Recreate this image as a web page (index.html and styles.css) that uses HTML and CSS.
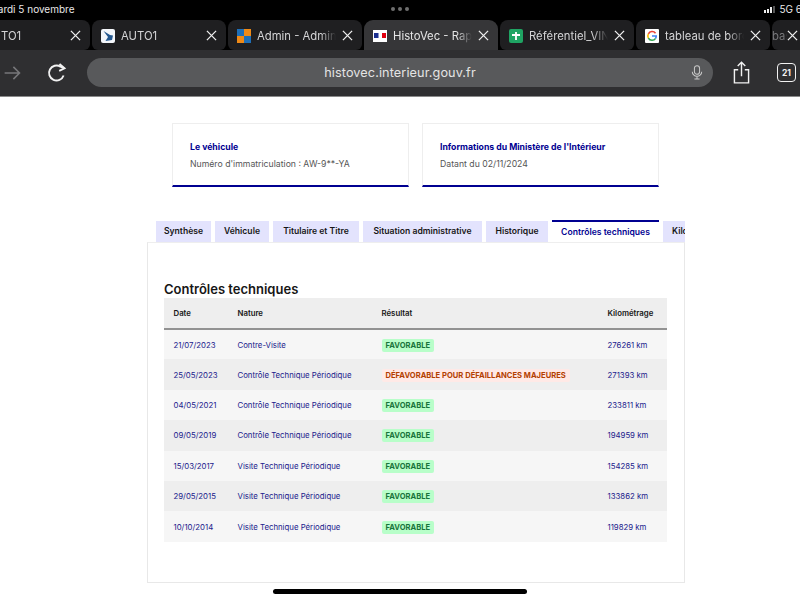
FILE: index.html
```html
<!DOCTYPE html>
<html lang="fr">
<head>
    <meta charset="UTF-8">
    <title>HistoVec - Rapport</title>
    <link rel="stylesheet" href="styles.css">
</head>
<body>
    <div class="status-bar">
        <span class="status-date">mardi 5 novembre</span>
        <span class="status-dots"><i></i><i></i><i></i></span>
        <span class="status-right">
            <span class="signal"><i></i><i></i><i></i><i></i></span>
            <span class="status-net">5G 61</span>
        </span>
    </div>

    <div class="tab-strip">
        <div class="tab">
            <span class="favicon"></span>
            <span class="tab-title">AUTO1</span>
            <svg class="tab-close" viewBox="0 0 12 12"><path d="M1 1L11 11M11 1L1 11"/></svg>
        </div>
        <div class="tab">
            <svg class="favicon" viewBox="0 0 14 14"><rect width="14" height="14" rx="2" fill="#f4f7fb"/><path d="M2.5 2L9 6L12 6.5L11 11L4.5 12L7 8Z" fill="#24588f"/></svg>
            <span class="tab-title">AUTO1</span>
            <svg class="tab-close" viewBox="0 0 12 12"><path d="M1 1L11 11M11 1L1 11"/></svg>
        </div>
        <div class="tab">
            <svg class="favicon" viewBox="0 0 14 14"><rect x="7" width="7" height="7" fill="#ef8a17"/><rect y="7" width="7" height="7" fill="#ef8a17"/><rect width="7" height="7" fill="#1e6fb8"/><rect x="7" y="7" width="7" height="7" fill="#1e6fb8"/></svg>
            <span class="tab-title">Admin - Admin</span>
            <svg class="tab-close" viewBox="0 0 12 12"><path d="M1 1L11 11M11 1L1 11"/></svg>
        </div>
        <div class="tab tab-active">
            <svg class="favicon" viewBox="0 0 14 14"><rect y="1" width="14" height="12" fill="#fff"/><rect x="1" y="4" width="4.5" height="5" fill="#1b2f8f"/><rect x="9" y="4" width="4" height="5" fill="#e1000f"/></svg>
            <span class="tab-title">HistoVec - Rapport</span>
            <svg class="tab-close" viewBox="0 0 12 12"><path d="M1 1L11 11M11 1L1 11"/></svg>
        </div>
        <div class="tab">
            <svg class="favicon" viewBox="0 0 14 14"><rect width="14" height="14" rx="2" fill="#1fa463"/><path d="M3 6H11M7 3V11" stroke="#fff" stroke-width="1.8" fill="none"/></svg>
            <span class="tab-title">Référentiel_VIN</span>
            <svg class="tab-close" viewBox="0 0 12 12"><path d="M1 1L11 11M11 1L1 11"/></svg>
        </div>
        <div class="tab">
            <svg class="favicon" viewBox="0 0 14 14"><rect width="14" height="14" rx="1" fill="#fff"/><path d="M10.5 4.2A4.2 4.2 0 0 0 3.4 4.9" stroke="#ea4335" stroke-width="1.6" fill="none"/><path d="M3.4 4.9A4.2 4.2 0 0 0 3.4 9.1" stroke="#fbbc05" stroke-width="1.6" fill="none"/><path d="M3.4 9.1A4.2 4.2 0 0 0 10.6 9.4" stroke="#34a853" stroke-width="1.6" fill="none"/><path d="M10.6 9.4C11 8.8 11.2 8 11.2 7H7" stroke="#4285f4" stroke-width="1.6" fill="none"/></svg>
            <span class="tab-title">tableau de bord</span>
            <svg class="tab-close" viewBox="0 0 12 12"><path d="M1 1L11 11M11 1L1 11"/></svg>
        </div>
        <div class="tab tab-last">
            <span class="tab-title">bas</span>
            <svg class="tab-close" viewBox="0 0 12 12"><path d="M1 1L11 11M11 1L1 11"/></svg>
        </div>
    </div>

    <div class="toolbar">
        <svg class="tool-forward" viewBox="0 0 20 16"><path d="M1 8H18M11 1L18 8L11 15"/></svg>
        <svg class="tool-reload" viewBox="0 0 20 20"><path d="M16.6 12.5A7.5 7.5 0 1 1 13.5 3.6L17 5.2"/><path d="M12.5 1L17.5 5.3L12.2 7.8"/></svg>
        <div class="url-pill">
            <span class="url-text">histovec.interieur.gouv.fr</span>
            <svg class="tool-mic" viewBox="0 0 14 18"><rect x="4" y="1" width="6" height="10" rx="3"/><path d="M1.5 8A5.5 5.5 0 0 0 12.5 8M7 13.5V16.5M4 16.5H10"/></svg>
        </div>
        <svg class="tool-share" viewBox="0 0 18 24"><path d="M5.5 9H1.5V23H16.5V9H12.5M9 16V1.5M5 5L9 1.2L13 5"/></svg>
        <span class="tab-count">21</span>
    </div>

    <main class="page">
        <section class="cards">
            <div class="card">
                <h3>Le véhicule</h3>
                <p>Numéro d'immatriculation : AW-9**-YA</p>
            </div>
            <div class="card">
                <h3>Informations du Ministère de l'Intérieur</h3>
                <p>Datant du 02/11/2024</p>
            </div>
        </section>

        <nav class="report-tabs">
            <span class="report-tab">Synthèse</span>
            <span class="report-tab">Véhicule</span>
            <span class="report-tab">Titulaire et Titre</span>
            <span class="report-tab">Situation administrative</span>
            <span class="report-tab">Historique</span>
            <span class="report-tab report-tab-on">Contrôles techniques</span>
            <span class="report-tab report-tab-cut">Kilométrage</span>
        </nav>

        <section class="panel">
            <h2>Contrôles techniques</h2>
            <table class="ct-table">
                <colgroup>
                    <col class="col-date"><col class="col-nature"><col class="col-result"><col class="col-km">
                </colgroup>
                <thead>
                    <tr><th>Date</th><th>Nature</th><th>Résultat</th><th>Kilométrage</th></tr>
                </thead>
                <tbody>
                    <tr><td>21/07/2023</td><td>Contre-Visite</td><td><span class="badge">FAVORABLE</span></td><td>276261 km</td></tr>
                    <tr><td>25/05/2023</td><td>Contrôle Technique Périodique</td><td><span class="badge badge-bad">DÉFAVORABLE POUR DÉFAILLANCES MAJEURES</span></td><td>271393 km</td></tr>
                    <tr><td>04/05/2021</td><td>Contrôle Technique Périodique</td><td><span class="badge">FAVORABLE</span></td><td>233811 km</td></tr>
                    <tr><td>09/05/2019</td><td>Contrôle Technique Périodique</td><td><span class="badge">FAVORABLE</span></td><td>194959 km</td></tr>
                    <tr><td>15/03/2017</td><td>Visite Technique Périodique</td><td><span class="badge">FAVORABLE</span></td><td>154285 km</td></tr>
                    <tr><td>29/05/2015</td><td>Visite Technique Périodique</td><td><span class="badge">FAVORABLE</span></td><td>133862 km</td></tr>
                    <tr><td>10/10/2014</td><td>Visite Technique Périodique</td><td><span class="badge">FAVORABLE</span></td><td>119829 km</td></tr>
                </tbody>
            </table>
        </section>
    </main>

    <div class="home-bar"></div>
</body>
</html>
```

FILE: styles.css
```css
* {
    margin: 0;
    padding: 0;
    box-sizing: border-box;
}
html, body {
    width: 800px;
    height: 600px;
    overflow: hidden;
    background: #fff;
}
body {
    position: relative;
    font-family: Inter, "Liberation Sans", sans-serif;
}

/* status bar */
.status-bar {
    height: 20px;
    background: #000;
    color: #e8e8e8;
    font-size: 10px;
    display: flex;
    align-items: center;
    justify-content: space-between;
    margin: 0 -11px;
    padding-bottom: 2px;
}
.status-date {
    width: 150px;
}
.status-dots {
    display: flex;
    gap: 3px;
}
.status-dots i {
    width: 4px;
    height: 4px;
    border-radius: 50%;
    background: #6f6f6f;
}
.status-right {
    width: 150px;
    display: flex;
    justify-content: flex-end;
    align-items: center;
    gap: 4px;
    padding-right: 5px;
}
.signal {
    display: flex;
    align-items: flex-end;
    gap: 1px;
    height: 7px;
}
.signal i {
    width: 2px;
    background: #eee;
}
.signal i:nth-child(1) { height: 3px; }
.signal i:nth-child(2) { height: 4px; }
.signal i:nth-child(3) { height: 6px; }
.signal i:nth-child(4) { height: 7px; background: #555; }

/* browser tabs */
.tab-strip {
    height: 30px;
    background: #000;
    display: flex;
    gap: 2px;
    margin-left: -44px;
    overflow: hidden;
}
.tab {
    flex: 0 0 134px;
    min-width: 0;
    height: 30px;
    background: #1f1f21;
    border-radius: 8px 8px 6px 6px;
    display: flex;
    align-items: center;
    padding: 1px 9px 0;
    color: #d4d4d6;
    font-size: 11.3px;
}
.tab-active {
    background: #363638;
    border-radius: 9px 9px 0 0;
    color: #e6e6e6;
}
.tab-last {
    padding-left: 0;
}
.tab-last .tab-title {
    flex: none;
    width: 15px;
    margin-left: 0;
    color: #77777a;
}
.tab-last .tab-close {
    margin-left: 0;
}
.favicon {
    width: 14px;
    height: 14px;
    flex: none;
}
.tab-title {
    flex: 1;
    min-width: 0;
    margin-left: 6px;
    white-space: nowrap;
    overflow: hidden;
    -webkit-mask-image: linear-gradient(to right, #000 80%, transparent 100%);
    mask-image: linear-gradient(to right, #000 80%, transparent 100%);
}
.tab-close {
    width: 11px;
    height: 11px;
    flex: none;
    margin: 0 0 0 6px;
    fill: none;
    stroke: #f0f0f0;
    stroke-width: 1.4;
}

/* toolbar */
.toolbar {
    height: 47px;
    background: #2f2f31;
    border-bottom: 1px solid #8a8a8a;
    display: flex;
    align-items: center;
    padding-bottom: 1px;
}
.tool-forward {
    width: 19px;
    height: 14px;
    margin-left: 3px;
    fill: none;
    stroke: #77777a;
    stroke-width: 1.8;
}
.tool-reload {
    width: 20px;
    height: 20px;
    margin-left: 25px;
    fill: none;
    stroke: #f2f2f2;
    stroke-width: 1.9;
}
.url-pill {
    width: 626px;
    height: 29px;
    margin-left: 20px;
    border-radius: 15px;
    background: #58595b;
    display: flex;
    align-items: center;
    justify-content: center;
    position: relative;
}
.url-text {
    color: #e4e4e4;
    font-size: 12.7px;
    letter-spacing: 0.1px;
}
.tool-mic {
    position: absolute;
    right: 10px;
    top: 6px;
    width: 12px;
    height: 17px;
    fill: none;
    stroke: #c8c8c8;
    stroke-width: 1.2;
}
.tool-share {
    width: 17px;
    height: 23px;
    margin-left: 20px;
    fill: none;
    stroke: #f2f2f2;
    stroke-width: 1.5;
}
.tab-count {
    width: 19px;
    height: 19px;
    margin-left: 27px;
    flex: none;
    border: 1.5px solid #f2f2f2;
    border-radius: 4px;
    color: #f2f2f2;
    font-size: 8.5px;
    font-weight: 700;
    display: flex;
    align-items: center;
    justify-content: center;
}

/* page */
.page {
    width: 538px;
    margin-left: 147px;
    padding-top: 26px;
}
.cards {
    display: flex;
    gap: 13px;
    padding-left: 25px;
}
.card {
    width: 237px;
    height: 64px;
    border: 1px solid #eeeeee;
    border-bottom: 2px solid #000091;
    padding: 17px 17px 0;
}
.card h3 {
    font-size: 8.7px;
    font-weight: 700;
    color: #000091;
    line-height: 12px;
}
.card p {
    font-size: 8.7px;
    color: #555;
    line-height: 12px;
    margin-top: 5px;
}

.report-tabs {
    display: flex;
    gap: 4px;
    padding-left: 9px;
    margin-top: 33px;
    height: 22px;
    overflow: hidden;
}
.report-tab {
    flex: none;
    background: #e3e3fd;
    color: #161616;
    font-size: 8.6px;
    font-weight: 600;
    line-height: 21px;
    height: 21px;
    margin-top: 1px;
    text-align: center;
    white-space: nowrap;
}
/* onglets : largeurs relevees sur la maquette */
.report-tab:nth-child(1) { width: 55px; }
.report-tab:nth-child(2) { width: 54px; }
.report-tab:nth-child(3) { width: 86px; }
.report-tab:nth-child(4) { width: 119px; }
.report-tab:nth-child(5) { width: 62px; }
.report-tab:nth-child(6) { width: 107px; }
.report-tab-cut {
    padding-left: 9px;
    text-align: left;
}
.report-tab-on {
    background: #fff;
    color: #000091;
    border-top: 2px solid #000091;
    height: 22px;
    margin-top: 0;
    line-height: 20px;
}

.panel {
    height: 341px;
    border: 1px solid #e8e8e8;
    border-top: 1px solid #eeeeee;
    padding: 38px 17px 0 16px;
}
.panel h2 {
    font-size: 13px;
    font-weight: 600;
    color: #161616;
    line-height: 17px;
}
.ct-table {
    width: 503px;
    table-layout: fixed;
    border-collapse: collapse;
    font-size: 7.8px;
}
.col-date { width: 64px; }
.col-nature { width: 144px; }
.col-result { width: 226px; }
.col-km { width: 69px; }
.ct-table th {
    height: 31px;
    background: #eeeeee;
    border-bottom: 2px solid #929292;
    color: #161616;
    font-weight: 600;
    text-align: left;
    padding-left: 9.5px;
}
.ct-table td {
    height: 30.4px;
    color: #1a1a8c;
    padding-left: 9.5px;
    white-space: nowrap;
}
.ct-table tbody tr:nth-child(odd) { background: #f6f6f6; }
.ct-table tbody tr:nth-child(even) { background: #eeeeee; }
.badge {
    display: inline-block;
    vertical-align: middle;
    margin-top: 1px;
    background: #b8fec9;
    color: #18753c;
    font-size: 7.6px;
    font-weight: 700;
    line-height: 13px;
    height: 13px;
    padding: 0 4px;
    border-radius: 2px;
}
.badge-bad {
    background: #ffe9e6;
    color: #b34000;
}

.home-bar {
    position: absolute;
    left: 273px;
    top: 589px;
    width: 254px;
    height: 5px;
    border-radius: 3px;
    background: #000;
}
```
